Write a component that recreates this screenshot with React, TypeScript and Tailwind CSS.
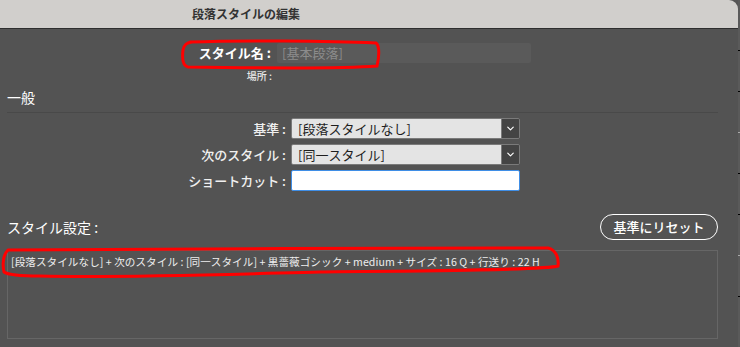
import { ChevronDown } from "lucide-react";

const FONT = { fontFamily: '"Noto Sans CJK JP", "Noto Sans", sans-serif' };

function SelectBox({ value }: { value: string }) {
  return (
    <div className="flex h-[21px] w-[229px] rounded-[2px] border border-[#7a7a7a] overflow-hidden">
      <div className="flex-1 bg-[#e4e4e4] pl-[6px] text-[13px] leading-[19px] text-[#1e1e1e]">{value}</div>
      <div className="w-[18px] bg-[#444444] border-l border-[#7a7a7a] flex items-center justify-center">
        <ChevronDown size={11} strokeWidth={2.5} className="text-white" />
      </div>
    </div>
  );
}

function FormRow({ label, children }: { label: string; children: React.ReactNode }) {
  return (
    <div className="flex items-center gap-[5px]">
      <div className="w-[286px] text-right text-[13px] font-medium text-[#f0f0f0]">{label}</div>
      {children}
    </div>
  );
}

export default function App() {
  return (
    <div className="flex h-[347px] w-[740px] bg-[#555555]" style={FONT}>
      <div className="relative flex w-[738px] flex-col rounded-tr-[9px] bg-[#535353] overflow-hidden">
        {/* title bar */}
        <div className="flex h-[29px] items-center border-b border-[#2e2e2e] bg-[#d1cfcc] pl-[192px]">
          <span className="text-[12px] font-bold text-[#333333]">段落スタイルの編集</span>
        </div>

        {/* style name */}
        <div className="mt-[14px] flex items-center">
          <div className="w-[271px] text-right text-[13px] font-bold text-white">スタイル名 :</div>
          <div className="ml-[6px] h-[20px] w-[254px] rounded-[2px] bg-[#5a5a5a] pl-[5px] text-[13px] leading-[20px] text-[#8c8c8c]">
            [基本段落]
          </div>
        </div>
        <div className="mt-[5px] w-[272px] text-right text-[10px] font-medium text-[#e8e8e8]">場所 :</div>

        {/* general */}
        <div className="mt-[4px] px-[7px] text-[14px] text-white">一般</div>
        <div className="mx-[7px] mt-[4px] h-px w-[711px] bg-[#494949]" />

        <div className="mt-[5px] flex flex-col gap-[5px]">
          <FormRow label="基準 :">
            <SelectBox value="[段落スタイルなし]" />
          </FormRow>
          <FormRow label="次のスタイル :">
            <SelectBox value="[同一スタイル]" />
          </FormRow>
          <FormRow label="ショートカット :">
            <div className="h-[21px] w-[229px] rounded-[2px] border-[1.5px] border-[#3f8ee6] bg-white" />
          </FormRow>
        </div>

        {/* style settings */}
        <div className="mt-[23px] flex items-center pl-[7px] pr-[20px]">
          <div className="flex-1 text-[14px] text-white">スタイル設定 :</div>
          <div className="flex h-[26px] w-[118px] items-center justify-center rounded-full border-[1.5px] border-white text-[13px] font-medium text-white">
            基準にリセット
          </div>
        </div>
        <div className="mx-[7px] mt-[10px] h-[89px] w-[711px] border border-[#666666] px-[3px] pt-[3px]">
          <div className="text-[10.6px] tracking-[0.05px] text-[#eeeeee] whitespace-nowrap">
            [段落スタイルなし] + 次のスタイル : [同一スタイル] + 黒薔薇ゴシック + medium + サイズ : 16 Q + 行送り : 22 H
          </div>
        </div>

        {/* red annotation marks */}
        <svg className="pointer-events-none absolute left-0 top-0" width="738" height="347" fill="none">
          <path
            d="M190 42 C240 40 330 41 376 43 C380 46 379 58 377 66 C340 69 250 68 188 67 C183 66 182 58 183 50 C184 45 186 43 192 42"
            stroke="#ff0000"
            strokeWidth="3"
            strokeLinecap="round"
          />
          <path
            d="M8 250 C150 248 400 249 548 248 C556 250 559 258 558 266 C545 270 420 271 320 272 C240 274 120 278 40 276 C20 276 8 275 4 272 C2 262 3 255 8 250"
            stroke="#ff0000"
            strokeWidth="3"
            strokeLinecap="round"
          />
        </svg>
      </div>
      <div className="flex w-[2px] flex-col justify-around bg-[#5a5a5a] py-[30px]">
        <div className="h-px bg-black" />
        <div className="h-px bg-black" />
        <div className="h-px bg-[#aaaaaa]" />
        <div className="h-px bg-black" />
        <div className="h-px bg-black" />
        <div className="h-px bg-[#aaaaaa]" />
        <div className="h-px bg-black" />
      </div>
    </div>
  );
}
